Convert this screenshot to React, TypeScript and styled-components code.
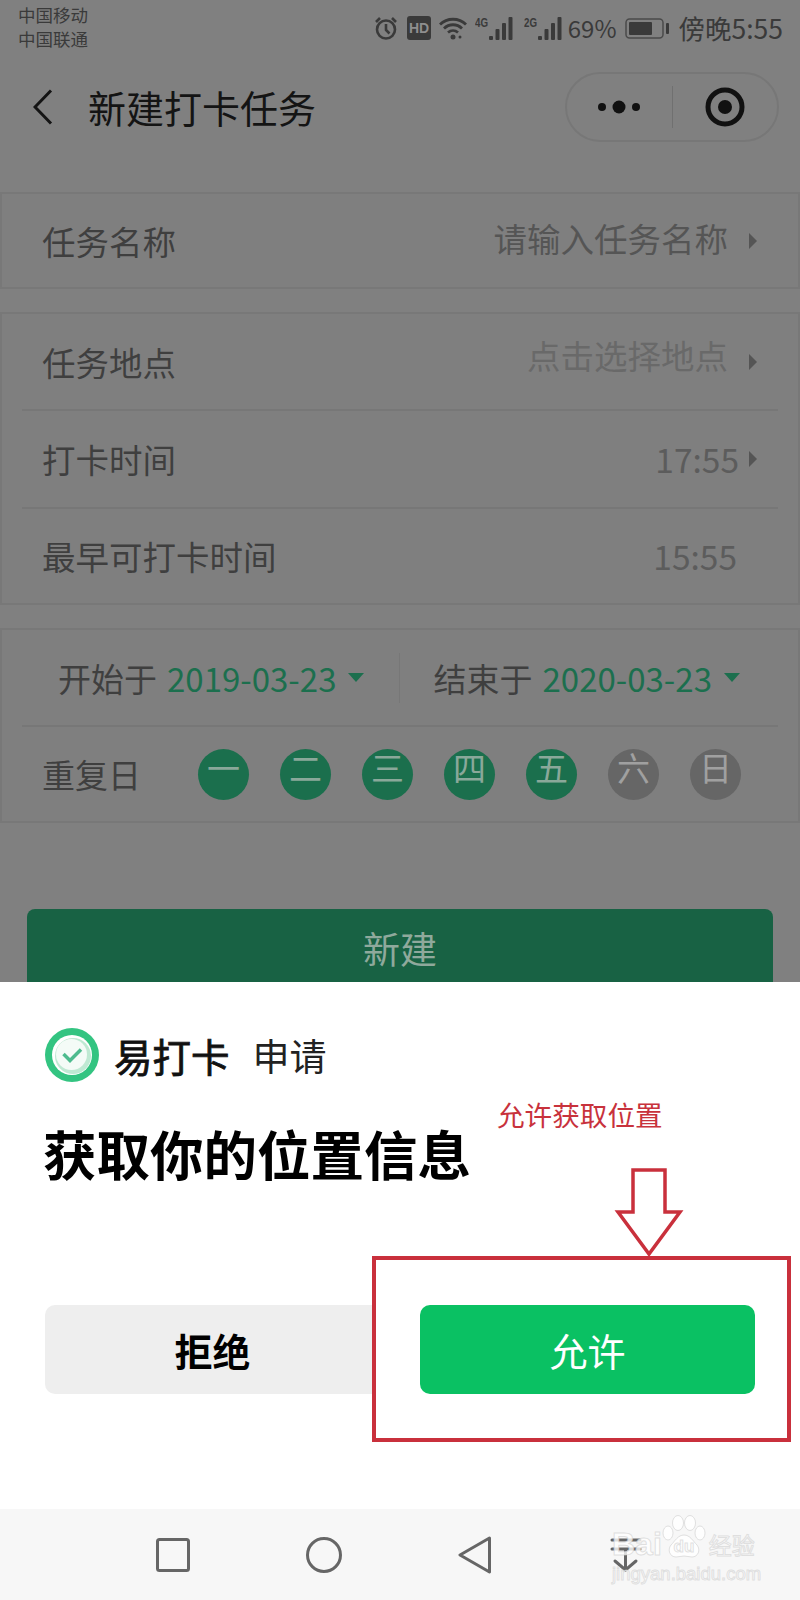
import React from "react"
import styled, { createGlobalStyle } from "styled-components"

const CJK = `"Noto Sans CJK SC", "Noto Sans", sans-serif`

const Global = createGlobalStyle`
  html, body {
    margin: 0;
    padding: 0;
    background: #808080;
    font-family: ${CJK};
  }
  * { box-sizing: border-box; }
`

const Page = styled.div`
  position: relative;
  width: 800px;
  height: 1600px;
  overflow: hidden;
  display: flex;
  flex-direction: column;
`

const Dimmed = styled.div`
  height: 982px;
  flex: none;
  background: #808080;
  overflow: hidden;
`

const StatusBar = styled.div`
  height: 61px;
  padding: 3px 17px 0 18px;
  display: flex;
  justify-content: space-between;
  align-items: flex-start;
  color: #3a3a3a;
`

const Carriers = styled.div`
  font-size: 17.5px;
  line-height: 24px;
`

const StatusRight = styled.div`
  display: flex;
  align-items: center;
  height: 50px;
  line-height: 50px;
`

const StatusText = styled.span<{ $left: number; $size: number }>`
  margin-left: ${p => p.$left}px;
  font-size: ${p => p.$size}px;
`

const StatusIcon = styled.svg<{ $left: number }>`
  margin-left: ${p => p.$left}px;
  flex: none;
  display: block;
`

const Header = styled.div`
  height: 92px;
  margin-bottom: 39px;
  padding: 0 21px 0 33px;
  display: flex;
  align-items: center;
`

const Title = styled.div`
  margin-left: 35px;
  flex: 1;
  font-size: 38px;
  line-height: 50px;
  color: #141414;
`

const Capsule = styled.div`
  width: 214px;
  height: 70px;
  border: 2px solid #777;
  border-radius: 35px;
  display: flex;
  align-items: center;
`

const CapsulePart = styled.div`
  flex: 1;
  height: 100%;
  display: flex;
  align-items: center;
  justify-content: center;
`

const CapsuleLine = styled.div`
  width: 1px;
  height: 42px;
  background: #707070;
`

const Section = styled.div`
  margin-bottom: 23px;
  padding: 0 20px;
  border: 2px solid #787878;
  background: #7f7f7f;
`

const Row = styled.div<{ $h: number; $line?: boolean }>`
  height: ${p => p.$h}px;
  padding: 0 21px 0 20px;
  display: flex;
  align-items: center;
  border-top: ${p => (p.$line ? "2px solid #777" : "none")};
  font-size: 33.5px;
  color: #3f3f3f;
`

const Label = styled.div`
  flex: 1;
  line-height: 44px;
`

const Value = styled.div<{ $color: string; $lift?: number; $gap: number }>`
  color: ${p => p.$color};
  line-height: 44px;
  margin-bottom: ${p => p.$lift || 0}px;
  margin-right: ${p => p.$gap}px;
`

const Arrow = styled.div`
  width: 0;
  height: 0;
  flex: none;
  border-left: 8px solid #555;
  border-top: 8px solid transparent;
  border-bottom: 8px solid transparent;
`

const DateRow = styled.div`
  height: 95px;
  display: flex;
  align-items: center;
  font-size: 33px;
  color: #3f3f3f;
`

const DateCell = styled.div<{ $pad: string }>`
  flex: 1;
  padding: ${p => p.$pad};
  display: flex;
  align-items: center;
  justify-content: center;
`

const DateValue = styled.span`
  color: #1c6f4e;
  margin-left: 10px;
`

const Caret = styled.div`
  margin-left: 12px;
  width: 0;
  height: 0;
  border-top: 9px solid #1c6f4e;
  border-left: 8px solid transparent;
  border-right: 8px solid transparent;
`

const DateLine = styled.div`
  width: 1px;
  height: 50px;
  background: #777;
`

const DayRow = styled.div`
  height: 96px;
  padding-left: 20px;
  border-top: 2px solid #777;
  display: flex;
  align-items: center;
  font-size: 33px;
  color: #3f3f3f;
`

const DayLabel = styled.div`
  width: 156px;
  flex: none;
`

const Days = styled.div`
  display: flex;
  gap: 31px;
`

const Day = styled.div<{ $on: boolean }>`
  width: 51px;
  height: 51px;
  border-radius: 50%;
  text-align: center;
  line-height: 36px;
  font-size: 33px;
  background: ${p => (p.$on ? "#1b6f4d" : "#666")};
  color: ${p => (p.$on ? "#8aa89a" : "#a0a0a0")};
`

const CreateButton = styled.div`
  margin: 86px 27px 0;
  height: 100px;
  padding-top: 13px;
  border-radius: 8px;
  background: #186244;
  color: #8fa99c;
  text-align: center;
  font-size: 37px;
  line-height: 52px;
`

const Sheet = styled.div`
  height: 527px;
  flex: none;
  background: #fff;
  padding: 46px 0 0 45px;
`

const Applicant = styled.div`
  height: 54px;
  display: flex;
  align-items: center;
  font-size: 37px;
  color: #111;
`

const AppName = styled.span`
  margin-left: 15px;
  font-size: 38.5px;
  -webkit-text-stroke: 0.8px #111;
`

const Applies = styled.span`
  margin-left: 23px;
  color: #222;
`

const Heading = styled.div`
  margin: 35px 0 0 -2px;
  height: 72px;
  font-size: 53.5px;
  line-height: 72px;
  font-weight: 700;
  color: #000;
`

const Buttons = styled.div`
  margin-top: 116px;
  display: flex;
`

const RefuseButton = styled.div`
  width: 327px;
  height: 89px;
  padding-left: 8px;
  border-radius: 10px 0 0 10px;
  background: #eeeeee;
  color: #000;
  font-size: 38px;
  font-weight: 700;
  display: flex;
  align-items: center;
  justify-content: center;
`

const AllowButton = styled.div`
  margin-left: 48px;
  width: 335px;
  height: 89px;
  border-radius: 10px;
  background: #0ac163;
  color: #fff;
  font-size: 38px;
  display: flex;
  align-items: center;
  justify-content: center;
`

const NavBar = styled.div`
  position: relative;
  flex: 1;
  background: #f7f7f7;
  padding-left: 97px;
  display: grid;
  grid-template-columns: repeat(4, 151px);
`

const NavItem = styled.div`
  display: flex;
  align-items: center;
  justify-content: center;
`

// annotations drawn over the screenshot
const Note = styled.div`
  position: absolute;
  left: 497px;
  top: 1098px;
  font-family: "Liberation Serif", "Noto Sans CJK SC", serif;
  font-size: 27.6px;
  line-height: 38px;
  color: #c8323c;
  white-space: nowrap;
`

const NoteArrow = styled.svg`
  position: absolute;
  left: 612px;
  top: 1165px;
`

const NoteBox = styled.div`
  position: absolute;
  left: 372px;
  top: 1256px;
  width: 419px;
  height: 186px;
  border: 4px solid #c9303c;
`

const Watermark = styled.div`
  position: absolute;
  left: 612px;
  top: 6px;
  width: 146px;
  height: 70px;
  font-family: "Liberation Sans", Arial, sans-serif;
  color: rgba(255, 255, 255, 0.8);
  -webkit-text-stroke: 1px rgba(205, 205, 205, 0.6);
`

const MarkTop = styled.div`
  display: flex;
  align-items: flex-end;
  height: 44px;
`

const MarkBai = styled.span`
  font-size: 32px;
  line-height: 30px;
  font-weight: 700;
`

const MarkCn = styled.span`
  margin-left: 3px;
  font-family: ${CJK};
  font-size: 23px;
  line-height: 30px;
`

const MarkUrl = styled.div`
  margin-top: 5px;
  font-size: 18.5px;
  line-height: 20px;
  white-space: nowrap;
`

const Alarm = () => (
  <StatusIcon $left={0} width="24" height="24" viewBox="0 0 24 24" fill="none" stroke="#3a3a3a" strokeWidth="2.6">
    <circle cx="12" cy="13.5" r="9" />
    <path d="M12 8v6l3.5 3.5M2 6l4-4M22 6l-4-4" />
  </StatusIcon>
)

const HdBadge = () => (
  <StatusIcon $left={9} width="24" height="24" viewBox="0 0 24 24">
    <rect width="24" height="24" rx="3" fill="#3a3a3a" />
    <text x="12" y="17" textAnchor="middle" fontSize="14" fontWeight="700" fontFamily="Liberation Sans, sans-serif" fill="#8e8e8e">HD</text>
  </StatusIcon>
)

const Wifi = () => (
  <StatusIcon $left={8} width="28" height="23" viewBox="0 0 28 23" fill="none" stroke="#3a3a3a" strokeWidth="2.800">
    <path d="M1 7.500C8 .5 20 .5 27 7.500M5 11.500C10 6.500 18 6.500 23 11.500M9 15.500c3-2.500 7-2.500 10 0" />
    <circle cx="14" cy="20" r="2.500" fill="#3a3a3a" stroke="none" />
    <circle cx="21" cy="20" r="1.500" fill="#3a3a3a" stroke="none" />
  </StatusIcon>
)

const Signal = ({ label, left }: { label: string; left: number }) => (
  <StatusIcon $left={left} width="39" height="24" viewBox="0 0 39 24" fill="#3a3a3a">
    <text x="0" y="11" fontSize="13.5" fontWeight="700" textLength="13" lengthAdjust="spacingAndGlyphs" fontFamily="Liberation Sans, sans-serif">{label}</text>
    <rect x="14" y="20" width="4" height="4" rx="1" />
    <rect x="20.5" y="13" width="4" height="11" rx="1" />
    <rect x="27" y="7" width="4" height="17" rx="1" />
    <rect x="33.5" y="1" width="4" height="23" rx="1" />
  </StatusIcon>
)

const Battery = () => (
  <StatusIcon $left={8} width="45" height="21" viewBox="0 0 45 21" fill="none">
    <rect x="1" y="1" width="37" height="19" rx="3.500" stroke="#4a4a4a" strokeWidth="1.500" />
    <rect x="4" y="4" width="23" height="13" rx="1" fill="#3a3a3a" />
    <rect x="41" y="5" width="3" height="11" rx="1" fill="#3a3a3a" />
  </StatusIcon>
)

const Back = () => (
  <svg width="20" height="36" viewBox="0 0 20 36" fill="none" stroke="#141414" strokeWidth="3">
    <path d="M18 1.500L2 18l16 16.500" />
  </svg>
)

const Dots = () => (
  <svg width="42" height="14" viewBox="0 0 42 14" fill="#111">
    <circle cx="4" cy="7" r="4" />
    <circle cx="21" cy="7" r="6.500" />
    <circle cx="38" cy="7" r="4" />
  </svg>
)

const Target = () => (
  <svg width="40" height="40" viewBox="0 0 40 40">
    <circle cx="20" cy="20" r="17" fill="none" stroke="#111" strokeWidth="5" />
    <circle cx="20" cy="20" r="7" fill="#111" />
  </svg>
)

const AppLogo = () => (
  <svg width="54" height="54" viewBox="0 0 54 54">
    <circle cx="27" cy="27" r="27" fill="#33c481" />
    <circle cx="27" cy="27" r="20" fill="#fff" />
    <circle cx="28" cy="28" r="18" fill="#bfe9d3" />
    <circle cx="26.500" cy="26.500" r="15.500" fill="#f4fbf7" />
    <path d="M18.500 26l6.500 6.500L36 21.500" fill="none" stroke="#4dbb8e" strokeWidth="3.500" />
  </svg>
)

const Paw = () => (
  <svg width="44" height="44" viewBox="0 0 44 44" fill="rgba(255,255,255,.8)" stroke="rgba(205,205,205,.6)" strokeWidth="1">
    <ellipse cx="6" cy="18" rx="5" ry="7" />
    <ellipse cx="16" cy="8" rx="5.500" ry="7.500" />
    <ellipse cx="28" cy="8" rx="5.500" ry="7.500" />
    <ellipse cx="38" cy="18" rx="5" ry="7" />
    <path d="M22 20c6 0 9 6 13 10 4 5 1 12-5 12-3 0-5-1-8-1s-5 1-8 1c-6 0-9-7-5-12 4-4 7-10 13-10z" />
    <text x="22" y="37" textAnchor="middle" fontSize="17" fontWeight="700" fontFamily="Liberation Sans, sans-serif">du</text>
  </svg>
)

const App = () => {
  const days = ["一", "二", "三", "四", "五", "六", "日"]
  return (
    <Page>
      <Global />
      <Dimmed>
        <StatusBar>
          <Carriers>
            <div>中国移动</div>
            <div>中国联通</div>
          </Carriers>
          <StatusRight>
            <Alarm />
            <HdBadge />
            <Wifi />
            <Signal label="4G" left={8} />
            <Signal label="2G" left={10} />
            <StatusText $left={5} $size={24}>69%</StatusText>
            <Battery />
            <StatusText $left={9} $size={26.5}>傍晚5:55</StatusText>
          </StatusRight>
        </StatusBar>

        <Header>
          <Back />
          <Title>新建打卡任务</Title>
          <Capsule>
            <CapsulePart><Dots /></CapsulePart>
            <CapsuleLine />
            <CapsulePart><Target /></CapsulePart>
          </Capsule>
        </Header>

        <Section>
          <Row $h={93}>
            <Label>任务名称</Label>
            <Value $color="#555" $lift={6} $gap={21}>请输入任务名称</Value>
            <Arrow />
          </Row>
        </Section>

        <Section>
          <Row $h={95}>
            <Label>任务地点</Label>
            <Value $color="#696969" $lift={14} $gap={21}>点击选择地点</Value>
            <Arrow />
          </Row>
          <Row $h={98} $line>
            <Label>打卡时间</Label>
            <Value $color="#5c5c5c" $gap={10}>17:55</Value>
            <Arrow />
          </Row>
          <Row $h={96} $line>
            <Label>最早可打卡时间</Label>
            <Value $color="#5c5c5c" $gap={20}>15:55</Value>
          </Row>
        </Section>

        <Section>
          <DateRow>
            <DateCell $pad="0 0 0 2px">
              开始于<DateValue>2019-03-23</DateValue><Caret />
            </DateCell>
            <DateLine />
            <DateCell $pad="0 4px 0 0">
              结束于<DateValue>2020-03-23</DateValue><Caret />
            </DateCell>
          </DateRow>
          <DayRow>
            <DayLabel>重复日</DayLabel>
            <Days>
              {days.map((d, i) => (
                <Day key={d} $on={i < 5}>{d}</Day>
              ))}
            </Days>
          </DayRow>
        </Section>

        <CreateButton>新建</CreateButton>
      </Dimmed>

      <Sheet>
        <Applicant>
          <AppLogo />
          <AppName>易打卡</AppName>
          <Applies>申请</Applies>
        </Applicant>
        <Heading>获取你的位置信息</Heading>
        <Buttons>
          <RefuseButton>拒绝</RefuseButton>
          <AllowButton>允许</AllowButton>
        </Buttons>
      </Sheet>

      <NavBar>
        <NavItem>
          <svg width="34" height="34" viewBox="0 0 34 34" fill="none" stroke="#666" strokeWidth="3">
            <rect x="1.500" y="1.500" width="31" height="31" rx="2" />
          </svg>
        </NavItem>
        <NavItem>
          <svg width="36" height="36" viewBox="0 0 36 36" fill="none" stroke="#666" strokeWidth="3">
            <circle cx="18" cy="18" r="16.500" />
          </svg>
        </NavItem>
        <NavItem>
          <svg width="34" height="38" viewBox="0 0 34 38" fill="none" stroke="#666" strokeWidth="3" strokeLinejoin="round">
            <path d="M31.500 2L2 19l29.500 17z" />
          </svg>
        </NavItem>
        <NavItem>
          <svg width="32" height="34" viewBox="0 0 32 34" fill="none" stroke="#666" strokeWidth="3" strokeLinecap="round">
            <path d="M2 2h28M2 11h28M15.500 11v21M5 23l10.500 9L26 23" />
          </svg>
        </NavItem>
        <Watermark>
          <MarkTop>
            <MarkBai>Bai</MarkBai>
            <Paw />
            <MarkCn>经验</MarkCn>
          </MarkTop>
          <MarkUrl>jingyan.baidu.com</MarkUrl>
        </Watermark>
      </NavBar>

      <Note>允许获取位置</Note>
      <NoteArrow width="72" height="92" viewBox="0 0 72 92" fill="none" stroke="#c9303c" strokeWidth="3.500">
        <path d="M21 5h32v42h15L37 89 6 47h15z" />
      </NoteArrow>
      <NoteBox />
    </Page>
  )
}

export default App
